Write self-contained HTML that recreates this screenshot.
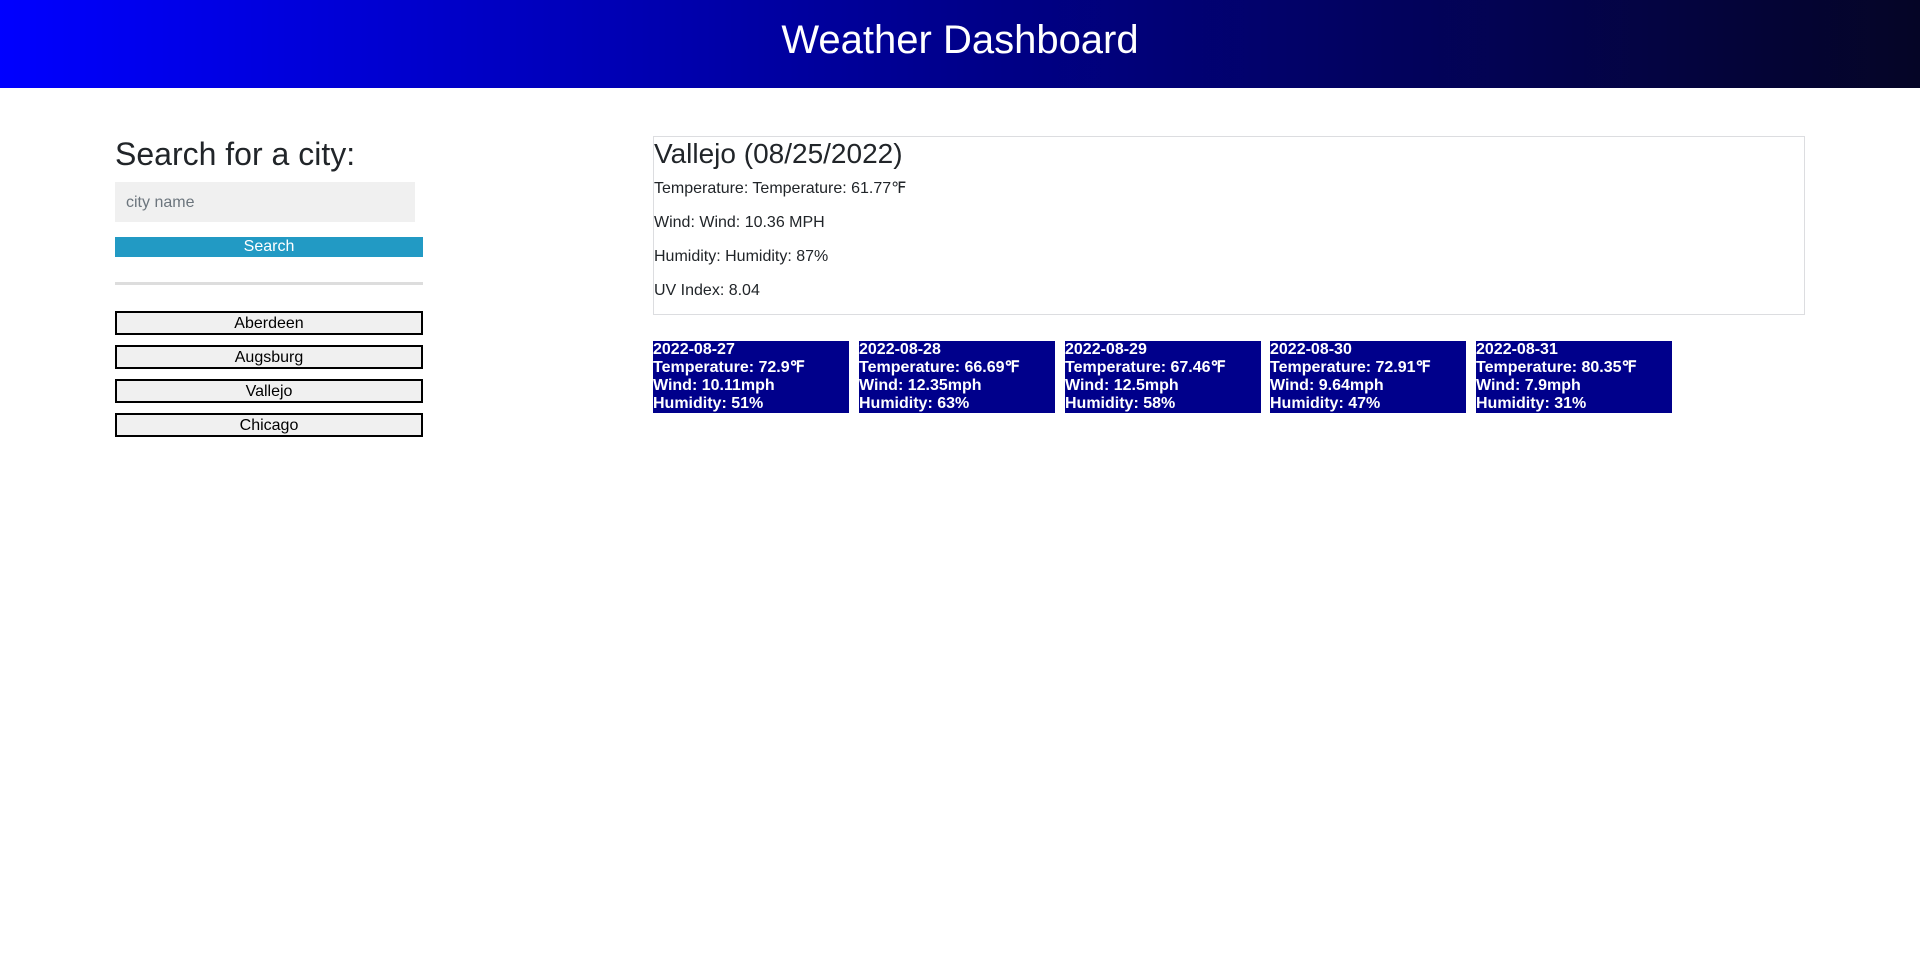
<!DOCTYPE html>
<html><head><meta charset="utf-8"><style>
*{box-sizing:border-box;margin:0;padding:0}
body{width:1920px;height:970px;background:#fff;font-family:"Liberation Sans",Arial,sans-serif;color:#212529;position:relative;overflow:hidden}
header{position:absolute;left:0;top:0;width:1920px;height:88px;background:linear-gradient(to right,#0000ff,#00008b 50%,#050526);color:#fff;text-align:center;font-size:40px;line-height:81px}
.a{position:absolute}
h2{position:absolute;left:115px;top:134px;font-size:32px;font-weight:400;line-height:40px}
.inp{left:115px;top:182px;width:300px;height:40px;background:#f0f0f0;color:#6c757d;font-size:16px;padding-left:11px;line-height:41px}
.btn{left:115px;top:237px;width:308px;height:20px;background:#229ac4;color:#fff;text-align:center;font-size:16px;line-height:20px}
.hr{left:115px;top:282px;width:308px;height:3px;background:#ddd}
.city{left:115px;width:308px;height:24px;border:2px solid #000;background:#f0f0f0;color:#000;text-align:center;font-size:16px;line-height:21px}
.card{left:653px;top:136px;width:1152px;height:179px;border:1px solid #dcdde0}
.card h3{position:absolute;left:0;top:0;font-size:28px;font-weight:400;line-height:34px}
.card p{position:absolute;left:0;font-size:16px;line-height:20px}
.fc{top:341px;width:196px;height:72px;background:#00008b;color:#fff;font-weight:bold;font-size:16px;line-height:18px}
</style></head><body>
<header>Weather Dashboard</header>
<h2>Search for a city:</h2>
<div class="a inp">city name</div>
<div class="a btn">Search</div>
<div class="a hr"></div>
<div class="a city" style="top:311px">Aberdeen</div>
<div class="a city" style="top:345px">Augsburg</div>
<div class="a city" style="top:379px">Vallejo</div>
<div class="a city" style="top:413px">Chicago</div>
<div class="a card">
<h3>Vallejo (08/25/2022)</h3>
<p style="top:42px">Temperature: Temperature: 61.77℉</p>
<p style="top:76px">Wind: Wind: 10.36 MPH</p>
<p style="top:110px">Humidity: Humidity: 87%</p>
<p style="top:144px">UV Index: 8.04</p>
</div>
<div class="a fc" style="left:653px">2022-08-27<br>Temperature: 72.9℉<br>Wind: 10.11mph<br>Humidity: 51%</div>
<div class="a fc" style="left:859px">2022-08-28<br>Temperature: 66.69℉<br>Wind: 12.35mph<br>Humidity: 63%</div>
<div class="a fc" style="left:1065px">2022-08-29<br>Temperature: 67.46℉<br>Wind: 12.5mph<br>Humidity: 58%</div>
<div class="a fc" style="left:1270px">2022-08-30<br>Temperature: 72.91℉<br>Wind: 9.64mph<br>Humidity: 47%</div>
<div class="a fc" style="left:1476px">2022-08-31<br>Temperature: 80.35℉<br>Wind: 7.9mph<br>Humidity: 31%</div>
</body></html>
